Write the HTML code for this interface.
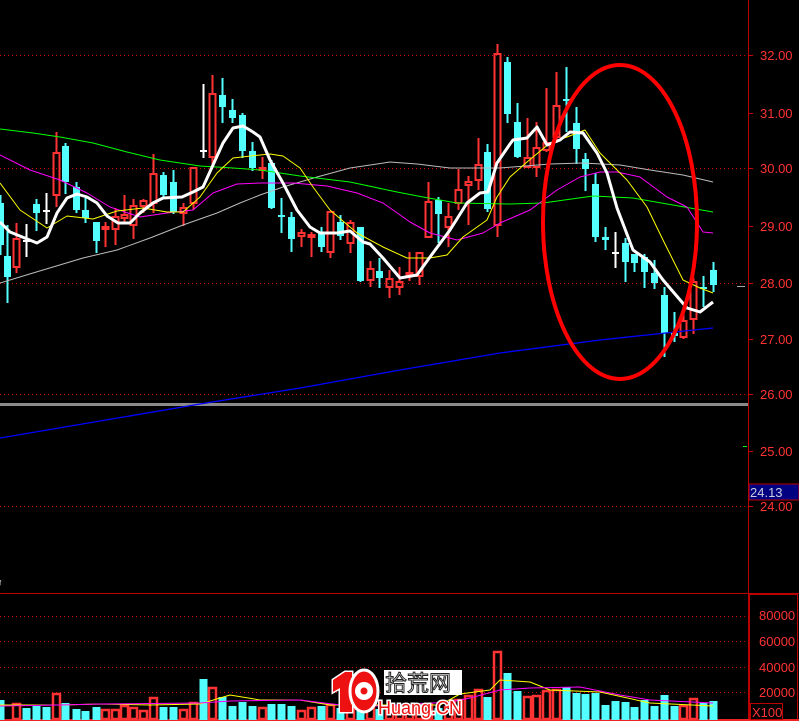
<!DOCTYPE html>
<html><head><meta charset="utf-8"><style>
html,body{margin:0;padding:0;background:#000;width:799px;height:721px;overflow:hidden}
svg{display:block}
text{font-family:"Liberation Sans",sans-serif}
</style></head><body>
<svg id="s" width="799" height="721" viewBox="0 0 799 721" xmlns="http://www.w3.org/2000/svg">
<rect width="799" height="721" fill="#000"/>
<g stroke="#c00" stroke-width="1" stroke-dasharray="1,3">
<line x1="0" y1="55.5" x2="746" y2="55.5"/><line x1="0" y1="168.5" x2="746" y2="168.5"/><line x1="0" y1="283.5" x2="746" y2="283.5"/><line x1="0" y1="394.5" x2="746" y2="394.5"/><line x1="0" y1="506.5" x2="746" y2="506.5"/>
<line x1="0" y1="616.5" x2="746" y2="616.5"/><line x1="0" y1="641.5" x2="746" y2="641.5"/><line x1="0" y1="667.5" x2="746" y2="667.5"/><line x1="0" y1="692.5" x2="746" y2="692.5"/>
</g>
<rect x="0" y="403" width="748" height="3" fill="#8a8a8a"/>
<line x1="748.5" y1="0" x2="748.5" y2="721" stroke="#b00" stroke-width="1"/>
<line x1="0" y1="593.5" x2="799" y2="593.5" stroke="#b00"/>
<rect x="749.5" y="594.5" width="48" height="126" fill="none" stroke="#b00"/>
<line x1="0" y1="720" x2="799" y2="720" stroke="#e22" stroke-width="2"/>
<g id="cand"></g>
<g id="ma" fill="none"></g>
<line x1="737" y1="286.5" x2="745" y2="286.5" stroke="#aaa"/>
<line x1="743" y1="446.5" x2="747" y2="446.5" stroke="#0f0"/>
<ellipse cx="620" cy="222" rx="77" ry="157" fill="none" stroke="#f00" stroke-width="4"/>
<g fill="#f33" font-size="13">
<text x="760" y="60">32.00</text><text x="760" y="118">31.00</text><text x="760" y="173">30.00</text><text x="760" y="231">29.00</text><text x="760" y="288">28.00</text><text x="760" y="344">27.00</text><text x="760" y="399">26.00</text><text x="760" y="456">25.00</text><text x="760" y="511">24.00</text>
<text x="759" y="620">80000</text><text x="759" y="646">60000</text><text x="759" y="672">40000</text><text x="759" y="697">20000</text>
</g>
<g stroke="#c00"><line x1="749" y1="55.5" x2="753" y2="55.5"/><line x1="749" y1="113.5" x2="753" y2="113.5"/><line x1="749" y1="168.5" x2="753" y2="168.5"/><line x1="749" y1="226.5" x2="753" y2="226.5"/><line x1="749" y1="283.5" x2="753" y2="283.5"/><line x1="749" y1="339.5" x2="753" y2="339.5"/><line x1="749" y1="394.5" x2="753" y2="394.5"/><line x1="749" y1="451.5" x2="753" y2="451.5"/><line x1="749" y1="506.5" x2="753" y2="506.5"/></g>
<rect x="749" y="484" width="50" height="16" fill="#000080" stroke="#b00"/>
<text x="750" y="497" fill="#ccd" font-size="13">24.13</text>
<rect x="750.5" y="703.5" width="32" height="16" fill="none" stroke="#b00"/>
<text x="752" y="717" fill="#f33" font-size="13">X100</text>
<text x="-2" y="585" fill="#fff" font-size="9">↑</text>
<g id="logo"></g>
</svg>
<script>
var NS="http://www.w3.org/2000/svg";
function el(p,t,a,tx){var e=document.createElementNS(NS,t);for(var k in a)e.setAttribute(k,a[k]);if(tx)e.textContent=tx;p.appendChild(e);return e;}
var g=document.getElementById('cand');
var C=[[0,203,245,195,255,'c'],[7,256,277,225,303,'c'],[16,239,267,223,273,'r'],[26,240,241,224,257,'w'],[36,204,213,199,231,'c'],[46,210,211,193,224,'w'],[56,153,195,132,207,'r'],[65,146,182,143,194,'c'],[76,187,210,182,213,'c'],[85,210,218,198,223,'c'],[96,222,241,222,253,'c'],[105,227,229,222,247,'r'],[115,217,229,208,245,'r'],[124,215,218,195,222,'r'],[133,206,225,199,239,'r'],[143,201,206,199,213,'r'],[153,174,203,154,213,'r'],[163,175,195,172,199,'c'],[173,182,212,170,214,'c'],[183,208,213,203,226,'r'],[193,168,203,168,210,'r'],[203,150,151,84,158,'w'],[212,94,157,75,165,'r'],[222,95,107,78,123,'c'],[232,110,118,99,123,'c'],[242,115,151,113,158,'c'],[252,151,168,142,171,'c'],[262,168,170,157,179,'r'],[271,163,208,160,209,'c'],[281,215,216,198,233,'c'],[291,217,239,212,252,'c'],[301,233,236,229,247,'r'],[311,235,237,232,257,'r'],[321,232,247,227,252,'c'],[330,212,252,212,258,'r'],[340,222,236,215,240,'c'],[350,223,243,220,253,'r'],[360,227,281,227,282,'c'],[370,269,280,261,287,'r'],[379,271,278,258,288,'c'],[389,279,287,270,298,'r'],[399,282,287,267,295,'r'],[409,273,275,252,281,'r'],[419,253,276,253,285,'r'],[428,202,237,182,238,'r'],[438,200,214,197,243,'c'],[448,217,227,203,247,'r'],[458,190,203,169,210,'r'],[468,182,185,176,225,'r'],[478,165,180,138,190,'r'],[487,152,209,144,212,'c'],[497,54,225,44,237,'r'],[507,62,114,57,123,'c'],[517,122,157,103,158,'c'],[527,158,167,118,168,'r'],[536,148,167,122,177,'r'],[546,143,150,88,152,'r'],[556,106,137,72,140,'r'],[566,99,101,67,132,'c'],[576,123,149,107,164,'c'],[585,159,169,153,191,'c'],[595,184,237,173,242,'c'],[605,237,240,227,250,'c'],[615,252,253,232,268,'w'],[625,243,262,238,282,'c'],[634,254,263,254,272,'c'],[644,257,272,254,288,'c'],[654,273,283,260,289,'c'],[664,295,333,287,357,'c'],[674,333,336,312,342,'c'],[683,321,337,311,339,'r'],[693,282,319,278,334,'r'],[703,287,288,276,307,'c'],[713,270,285,262,292,'c']];
var V={5:700,16:704,26:708,36:706,46:707,56:694,65:703,76:709,85:711,96:707,105:710,115:710,124:706,133:708,143:711,153:698,163:707,173:707,183:710,193:703,203:679,212:688,222:697,232:706,242:702,252:706,262:708,271:704,281:704,291:706,301:711,311:708,321:706,330:705,340:708,350:706,360:703,370:707,379:709,389:707,399:706,409:710,419:706,428:704,438:708,448:707,458:700,468:696,478:690,487:697,497:652,507:673,517:691,527:697,536:696,546:691,556:690,566:687,576:693,585:694,595:693,605:705,615:701,625:702,634:707,644:700,654:706,664:695,674:706,683:706,693:699,703:703,713:701};
var CY='#54ffff',RD='#ff3333';
C.forEach(function(c){var x=c[0],t=c[1],b=c[2],ht=c[3],hb=c[4],k=c[5];
 var col=k=='c'?CY:(k=='r'?RD:'#fff');
 if(k=='r'){el(g,'line',{x1:x+.5,y1:ht,x2:x+.5,y2:t,stroke:col,'stroke-width':2});el(g,'line',{x1:x+.5,y1:b,x2:x+.5,y2:hb,stroke:col,'stroke-width':2});
  el(g,'rect',{x:x-2.5,y:t,width:6,height:Math.max(b-t,2),fill:'none',stroke:col,'stroke-width':2});}
 else{el(g,'line',{x1:x+.5,y1:ht,x2:x+.5,y2:hb,stroke:col,'stroke-width':2});
  el(g,'rect',{x:x-3,y:t,width:7,height:Math.max(b-t,2),fill:col});}
 var vt=x==0?700:V[x];
 if(vt){ if(k=='r') el(g,'rect',{x:x-3,y:vt,width:7,height:719-vt,fill:'none',stroke:RD,'stroke-width':2.5});
  else el(g,'rect',{x:x-3.5,y:vt,width:8,height:720-vt,fill:CY});}
});
var m=document.getElementById('ma');
function pl(pts,col,w){el(m,'polyline',{points:pts,stroke:col,'stroke-width':w,'stroke-linejoin':'round'});}
pl("0,438 100,421 200,404 300,388 400,370 500,353 600,340 713,328","#0000ff",1.3);
pl("0,283 33,273 83,258 117,250 150,238 183,225 217,213 240,203 260,195 283,187 317,177 350,168 390,162 417,164 450,168 500,168 550,164 583,163 620,165 650,170 683,175 713,182","#bbb",1);
pl("0,129 33,133 60,137 93,143 127,152 160,160 200,166 233,168 260,170 300,176 350,182 397,192 423,197 457,203 510,204 543,203 593,196 633,198 673,205 713,212","#00ff00",1);
pl("0,155 30,170 60,180 87,193 110,207 140,217 167,213 193,210 213,193 237,184 260,183 293,183 327,186 357,193 383,203 410,222 430,233 457,240 483,233 500,223 530,210 557,190 580,177 600,172 617,172 640,177 667,197 687,207 703,232 713,233","#ff00ff",1);
pl("0,183 20,210 47,228 67,216 93,219 117,211 143,208 167,212 183,212 200,197 217,173 233,158 260,155 270,154 283,156 300,168 313,187 330,210 357,233 383,247 407,258 430,258 447,255 463,237 487,220 497,197 510,177 527,162 550,143 567,137 585,130 600,153 627,180 647,207 663,240 683,280 700,288 713,293","#ffff00",1);
pl("0,222 10,232 37,243 47,237 57,213 67,198 77,194 87,197 97,203 107,216 118,223 130,223 140,213 153,203 163,198 182,197 193,192 203,187 213,165 223,143 233,128 243,126 253,132 260,137 270,160 283,183 297,210 310,227 320,233 337,233 350,231 363,242 370,244 383,258 400,278 417,275 430,257 450,230 467,203 480,193 488,192 497,163 510,144 513,140 527,138 537,127 547,145 560,140 570,132 583,133 597,153 607,173 617,208 633,250 650,262 663,280 687,308 700,312 713,302","#fff",3);
pl("0,705 60,705 100,704 150,705 200,704 230,695 260,700 300,700 330,705 440,705 460,694 490,690 500,680 530,682 550,690 600,692 650,703 713,706","#ffff00",1);
pl("0,706 60,705 100,704 200,703 230,701 300,700 340,705 380,706 450,702 470,698 500,690 530,688 580,687 620,695 650,700 713,703","#ff00ff",1);
var L=document.getElementById('logo');
el(L,'rect',{x:384,y:670,width:78,height:25,fill:'#fff'});
el(L,'path',{d:'M333 680 L345 672 L352 672 L352 712 L340 712 L340 688 L333 692 Z',fill:'#e11',stroke:'#fff','stroke-width':3,'paint-order':'stroke'});
el(L,'ellipse',{cx:364,cy:691,rx:14,ry:21,fill:'#e11',stroke:'#fff','stroke-width':3});
el(L,'circle',{cx:364,cy:691,r:9,fill:'#fff'});
el(L,'circle',{cx:364,cy:691,r:3.5,fill:'#e11'});
el(L,'text',{x:385,y:691,'font-size':22,fill:'#fff',stroke:'#222','stroke-width':1,'font-family':'Noto Sans CJK SC,sans-serif'},'拾荒网');
el(L,'text',{x:378,y:714,'font-size':18,fill:'#e11',stroke:'#fff','stroke-width':3,'paint-order':'stroke'},'Huang.CN');
</script>
</body></html>
